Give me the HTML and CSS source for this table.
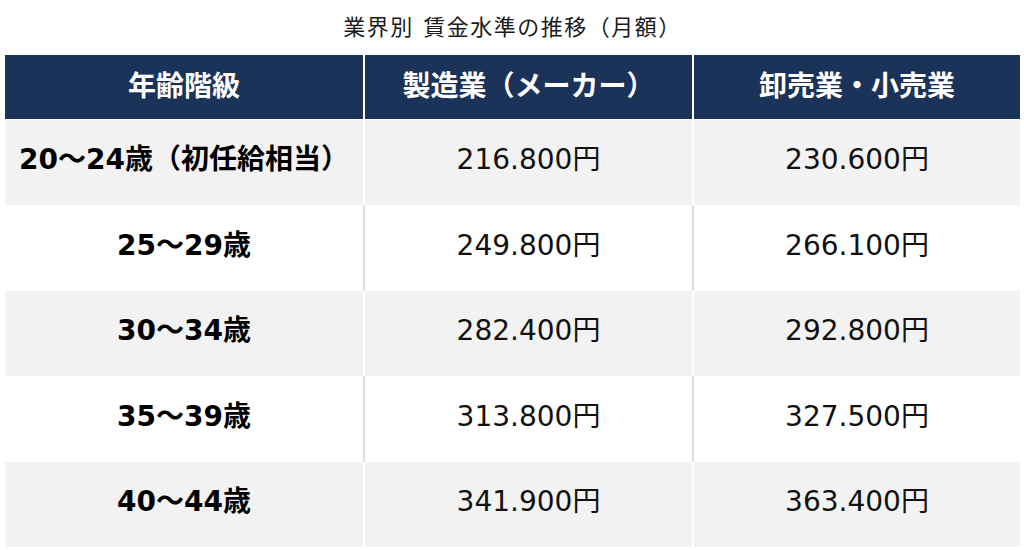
FILE: index.html
```html
<!DOCTYPE html>
<html lang="ja">
<head>
<meta charset="utf-8">
<title>業界別 賃金水準の推移（月額）</title>
<link rel="stylesheet" href="styles.css">
</head>
<body>
<div class="page">
  <h1 class="title">業界別 賃金水準の推移（月額）</h1>
  <table class="wage">
    <colgroup><col class="c1"><col class="c2"><col class="c3"></colgroup>
    <thead>
      <tr class="head"><th>年齢階級</th><th>製造業（メーカー）</th><th>卸売業・小売業</th></tr>
    </thead>
    <tbody>
      <tr class="shade"><td class="age">20～24歳（初任給相当）</td><td>216.800円</td><td>230.600円</td></tr>
      <tr class="plain"><td class="age">25～29歳</td><td>249.800円</td><td>266.100円</td></tr>
      <tr class="shade"><td class="age">30～34歳</td><td>282.400円</td><td>292.800円</td></tr>
      <tr class="plain"><td class="age">35～39歳</td><td>313.800円</td><td>327.500円</td></tr>
      <tr class="shade"><td class="age">40～44歳</td><td>341.900円</td><td>363.400円</td></tr>
    </tbody>
  </table>
</div>
</body>
</html>
```
FILE: styles.css
```css
html, body {
  margin: 0;
  background: #ffffff;
}
.page {
  padding: 0 4px 0 5px;
  font-family: "DejaVu Sans", "Noto Sans CJK JP", sans-serif;
  color: #111111;
}
.title {
  margin: 0;
  height: 55px;
  box-sizing: border-box;
  padding-top: 10px;
  line-height: 30px;
  font-family: "Noto Sans CJK JP", sans-serif;
  font-size: 22px;
  font-weight: 400;
  letter-spacing: 1.5px;
  word-spacing: 3px;
  text-align: center;
  color: #1a1a1a;
}
.wage {
  width: 1015px;
  border-collapse: separate;
  border-spacing: 0;
  table-layout: fixed;
}
.c1 { width: 360px; }
.c2 { width: 329px; }
.c3 { width: 326px; }
.wage th,
.wage td {
  padding: 0;
  text-align: center;
  vertical-align: middle;
  line-height: 1.2;
}
.head {
  height: 65px;
}
.wage th {
  background: #1b3358;
  color: #ffffff;
  font-family: "Noto Sans CJK JP", sans-serif;
  font-size: 28px;
  font-weight: 700;
  border-right: 2px solid #ffffff;
  border-bottom: 1px solid #ffffff;
  padding-bottom: 5px;
}
.wage tbody tr {
  height: 85.4px;
}
.wage td {
  font-size: 28px;
  font-weight: 400;
  padding-bottom: 5px;
}
.wage td.age {
  font-weight: 700;
  color: #000000;
}
.shade td {
  background: #f2f2f2;
  border-right: 2px solid #ffffff;
}
.plain td {
  background: #ffffff;
  border-right: 2px solid #dedede;
}
.wage th:last-child,
.wage td:last-child {
  border-right: 0;
}
```
